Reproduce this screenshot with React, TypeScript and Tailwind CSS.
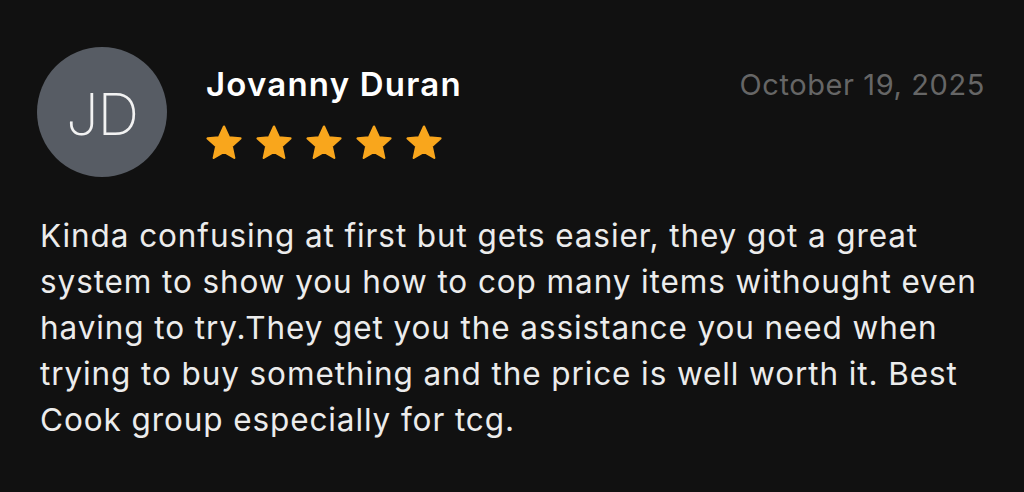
import React from "react";

const Star = () => (
  <svg width="38" height="38" viewBox="0 0 24 24" className="shrink-0">
    <polygon
      points="12,1.6 15.1,8.4 22.4,9.1 16.9,14 18.5,21.4 12,17.6 5.5,21.4 7.1,14 1.6,9.1 8.9,8.4"
      fill="#f9a61c"
      stroke="#f9a61c"
      strokeWidth="1.4"
      strokeLinejoin="round"
    />
  </svg>
);

export default function App() {
  return (
    <div
      className="w-[1024px] h-[492px] bg-[#111111] overflow-hidden"
      style={{ fontFamily: "Inter, 'Noto Sans', sans-serif" }}
    >
      <div className="pl-[37px] pr-[39px] pt-[47px]">
        <div className="flex items-start">
          <div className="w-[130px] h-[130px] rounded-full bg-[#575c64] flex items-center justify-center shrink-0">
            <span className="text-[58px] font-extralight text-[#f2f2f2] leading-none tracking-[-1px] mt-[4px]">JD</span>
          </div>
          <div className="ml-[39px] flex-1 flex justify-between items-start pt-[18px]">
            <div className="flex flex-col">
              <div className="text-[33px] font-semibold text-white leading-[38px] tracking-[1.2px]">
                Jovanny Duran
              </div>
              <div className="flex gap-[12px] mt-[21px] -ml-[1px]">
                <Star />
                <Star />
                <Star />
                <Star />
                <Star />
              </div>
            </div>
            <div className="text-[29px] text-[#666666] leading-[38px] tracking-[0.6px] mt-[1px]">
              October 19, 2025
            </div>
          </div>
        </div>
        <p className="mt-[36px] ml-[3px] text-[31.5px] leading-[46px] text-[#ececec] tracking-[0.9px] w-[950px]">
          Kinda confusing at first but gets easier, they got a great system to show you how to cop many items withought even having to try.They get you the assistance you need when trying to buy something and the price is well worth it. Best Cook group especially for tcg.
        </p>
      </div>
    </div>
  );
}
